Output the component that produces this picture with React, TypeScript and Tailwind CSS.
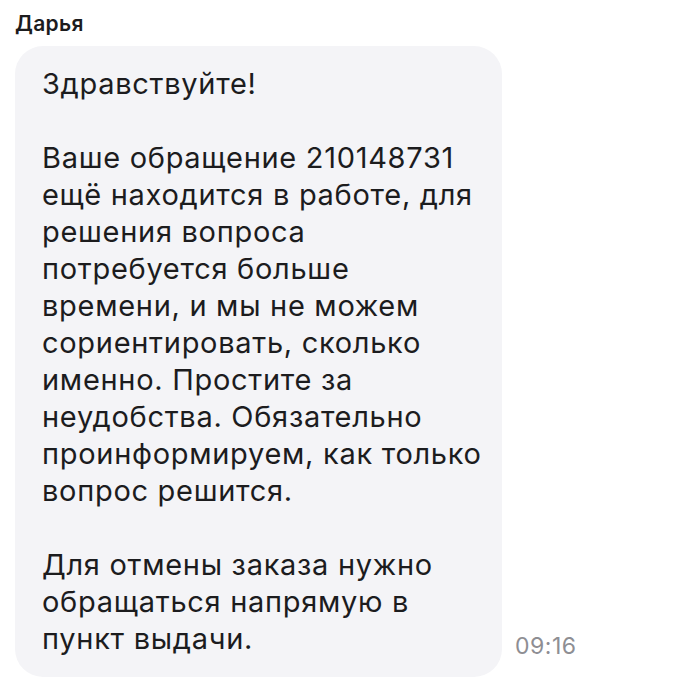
import React from "react";

const para1 = [
  "Ваше обращение 210148731",
  "ещё находится в работе, для",
  "решения вопроса",
  "потребуется больше",
  "времени, и мы не можем",
  "сориентировать, сколько",
  "именно. Простите за",
  "неудобства. Обязательно",
  "проинформируем, как только",
  "вопрос решится.",
];

const para2 = ["Для отмены заказа нужно", "обращаться напрямую в", "пункт выдачи."];

export default function App() {
  return (
    <div
      className="w-[700px] h-[684px] bg-white pl-[15px] pt-[10px]"
      style={{ fontFamily: "Inter, 'Noto Sans', sans-serif" }}
    >
      <div className="text-[21px] leading-[27px] font-semibold tracking-[0.3px] text-[#1c1c1e]">Дарья</div>
      <div className="flex items-end mt-[9px]">
        <div className="w-[487px] bg-[#f4f4f7] rounded-[28px] px-[27px] pt-[19px] pb-[20px] text-[29px] leading-[37px] tracking-[0.7px] text-[#1c1c1e]">
          <div className="whitespace-nowrap">Здравствуйте!</div>
          <div className="mt-[37px]">
            {para1.map((l) => (
              <div key={l} className="whitespace-nowrap">{l}</div>
            ))}
          </div>
          <div className="mt-[37px]">
            {para2.map((l) => (
              <div key={l} className="whitespace-nowrap">{l}</div>
            ))}
          </div>
        </div>
        <div className="ml-[13px] mb-[17px] text-[23px] leading-[28px] tracking-[0.5px] text-[#8e8e93]">09:16</div>
      </div>
    </div>
  );
}
